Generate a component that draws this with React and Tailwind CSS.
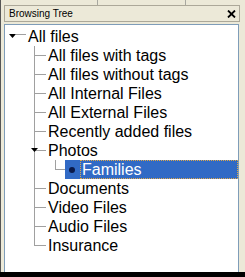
import React from 'react';

const LINE = 'border-[#A0A0A0]';

function Arrow({ className }) {
  return (
    <svg width="7" height="4" viewBox="0 0 7 4" className={className}>
      <polygon points="0,0 7,0 3.5,4" fill="#000" />
    </svg>
  );
}

function Branch({ last }) {
  return (
    <div className="flex flex-col w-[12px] h-full">
      <div className={`h-[10px] border-l border-b ${LINE}`} />
      {!last && <div className={`flex-1 border-l ${LINE}`} />}
    </div>
  );
}

function ChildRow({ label, last, expander }) {
  return (
    <div className="flex h-[19px] items-stretch">
      <div className="w-[29px] shrink-0" />
      <div className="relative">
        <Branch last={last} />
        {expander && <Arrow className="absolute left-[-3px] top-[7px]" />}
      </div>
      <div className="pl-[2px] leading-[19px] whitespace-nowrap">{label}</div>
    </div>
  );
}

export default function App() {
  const before = [
    'All files with tags',
    'All files without tags',
    'All Internal Files',
    'All External Files',
    'Recently added files',
  ];
  const after = ['Documents', 'Video Files', 'Audio Files'];

  return (
    <div className="w-[245px] h-[277px] flex flex-col bg-[#ECE9D8] overflow-hidden" style={{ fontFamily: '"Liberation Sans", Arial, sans-serif' }}>
      <div className="flex-1 flex flex-col border-l border-[#555555] min-h-0">
        <div className="flex h-[5px] shrink-0">
          <div className="w-[97px] border-r border-[#A8A8A0]" />
          <div className="w-[88px] border-r border-[#A8A8A0]" />
        </div>
        <div className="ml-[3px] w-[236px] h-[17px] shrink-0 flex items-center justify-between border border-[#ACA899] pl-[4px] pr-[3px]">
          <span className="text-[10px] text-black leading-none">Browsing Tree</span>
          <svg width="9" height="8" viewBox="0 0 9 8">
            <path d="M1 0.5 L8 7.5 M8 0.5 L1 7.5" stroke="#000" strokeWidth="1.8" />
          </svg>
        </div>
        <div className="ml-[3px] mt-[2px] w-[235px] flex-1 min-h-0 bg-white border-t border-x border-[#7F9DB9] pt-[2px] text-[16px] text-black">
          <div className="flex h-[19px] items-stretch">
            <div className="pl-[4px] w-[11px] shrink-0 flex items-center">
              <Arrow className="mt-[-2px]" />
            </div>
            <div className="w-[10px] flex flex-col">
              <div className={`h-[8px] border-b ${LINE}`} />
            </div>
            <div className="pl-[2px] leading-[19px]">All files</div>
          </div>
          {before.map((t) => (
            <ChildRow key={t} label={t} />
          ))}
          <ChildRow label="Photos" expander />
          <div className="flex h-[19px] items-stretch">
            <div className="w-[29px] shrink-0" />
            <div className={`w-[21px] shrink-0 border-l ${LINE}`} />
            <div className="w-[10px] shrink-0 flex flex-col">
              <div className={`h-[10px] border-l border-b ${LINE}`} />
            </div>
            <div className="flex-1 flex items-center bg-[#316AC5] text-white">
              <div className="ml-[4px] w-[6px] h-[6px] rounded-full bg-[#0A1A4A]" />
              <div className="ml-[5px] flex-1 h-full border border-dotted border-[#E0A848] pl-[1px] leading-[17px]">Families</div>
            </div>
          </div>
          {after.map((t) => (
            <ChildRow key={t} label={t} />
          ))}
          <ChildRow label="Insurance" last />
        </div>
      </div>
      <div className="h-[5px] shrink-0 bg-black" />
    </div>
  );
}
